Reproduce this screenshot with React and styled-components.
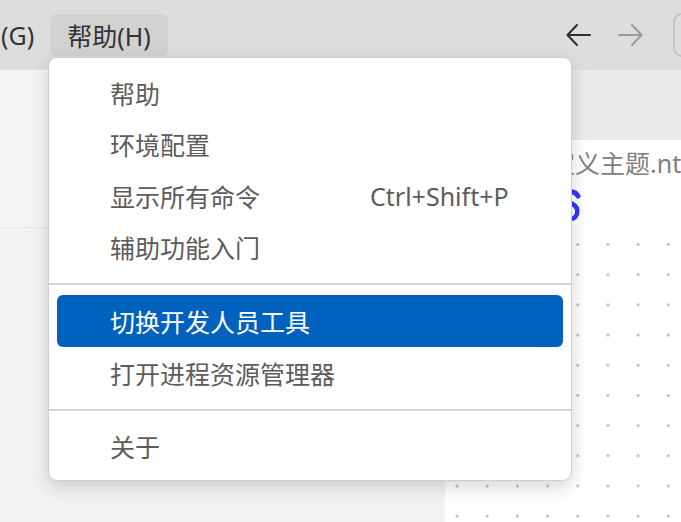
import React from "react"
import styled, { createGlobalStyle } from "styled-components"

const GlobalStyle = createGlobalStyle`
  html, body {
    margin: 0;
    padding: 0;
  }
  body {
    background: #f2f2f2;
    font-family: "Noto Sans", "Noto Sans CJK SC", sans-serif;
  }
`;

const Window = styled.div`
  position: relative;
  width: 681px;
  height: 522px;
  overflow: hidden;
  display: flex;
  flex-direction: column;
  background: #f2f2f2;
`;

const TitleBar = styled.div`
  flex: none;
  height: 70px;
  display: flex;
  align-items: center;
  background: #dddddd;
  color: #333333;
  font-size: 25px;
`;

const MenuBar = styled.div`
  display: flex;
  align-items: center;
  padding-left: 1px;
`;

const MenuName = styled.div`
  height: 42px;
  display: flex;
  align-items: center;
  padding: ${p => (p.$lead ? "0 16px 0 0" : "0 17px")};
  border-radius: 7px;
  white-space: nowrap;
  background: ${p => (p.$open ? "#d2d2d2" : "transparent")};
`;

const Spacer = styled.div`
  flex: 1;
`;

const Nav = styled.div`
  display: flex;
  align-items: center;
  gap: 27px;
`;

const NavIcon = styled.svg`
  display: block;
  width: 25px;
  height: 22px;
  color: ${p => (p.$disabled ? "#9a9a9a" : "#2e2e2e")};
`;

const SearchBox = styled.div`
  flex: none;
  box-sizing: border-box;
  width: 200px;
  height: 44px;
  margin-left: 30px;
  margin-right: -192px;
  border: 2px solid #c4c4c4;
  border-radius: 9px;
`;

const Body = styled.div`
  flex: 1;
  display: flex;
`;

const Sidebar = styled.div`
  flex: none;
  width: 445px;
  display: flex;
  flex-direction: column;
  background: #f2f2f2;
`;

const SidebarHead = styled.div`
  height: 157px;
  background: #f4f4f4;
  border-bottom: 1px solid #e7e7e7;
`;

const Editor = styled.div`
  flex: 1;
  display: flex;
  flex-direction: column;
`;

const TabStrip = styled.div`
  flex: none;
  height: 70px;
  background: #eaeaea;
`;

const Canvas = styled.div`
  flex: 1;
  display: flex;
  flex-direction: column;
  background: #ffffff;
`;

const CanvasHead = styled.div`
  flex: none;
  height: 90px;
  box-sizing: border-box;
  padding: 8px 0 0 80px;
`;

const DocTitle = styled.div`
  height: 30px;
  line-height: 30px;
  font-size: 25px;
  color: #808080;
  white-space: nowrap;
`;

const NodeMark = styled.svg`
  display: block;
  width: 22px;
  height: 36px;
  margin: 10px 0 0 37px;
`;

const DotGrid = styled.div`
  flex: 1;
  background-image: radial-gradient(circle, #b8b8b8 1px, transparent 1.6px);
  background-size: 30.2px 30.2px;
  background-position: -3.1px -0.6px;
`;

const Menu = styled.div`
  position: absolute;
  left: 48px;
  top: 57px;
  width: 524px;
  box-sizing: border-box;
  padding: 9px 0 8px;
  background: #ffffff;
  border: 1px solid #cfcfcf;
  border-radius: 9px;
  box-shadow: 0 6px 18px rgba(0, 0, 0, 0.16);
`;

const Item = styled.div`
  height: ${p => (p.$active ? "52px" : "51.5px")};
  margin: 0 8px;
  padding-left: 53px;
  display: grid;
  grid-template-columns: 260px auto;
  align-items: center;
  border-radius: 6px;
  font-size: 25px;
  white-space: nowrap;
  color: ${p => (p.$active ? "#ffffff" : "#5c5c5c")};
  background: ${p => (p.$active ? "#0062be" : "transparent")};
`;

const Separator = styled.div`
  height: 2px;
  margin: 10px 0;
  background: #d6d6d6;
`;

const groups = [
  [
    { label: "帮助" },
    { label: "环境配置" },
    { label: "显示所有命令", key: "Ctrl+Shift+P" },
    { label: "辅助功能入门" },
  ],
  [
    { label: "切换开发人员工具", active: true },
    { label: "打开进程资源管理器" },
  ],
  [{ label: "关于" }],
];

function Arrow({ dir, disabled }) {
  const d = dir === "left" ? "M11 1 L1.5 11 L11 21 M1.5 11 H24" : "M14 1 L23.5 11 L14 21 M23.5 11 H1";
  return (
    <NavIcon $disabled={disabled} viewBox="0 0 25 22">
      <path d={d} fill="none" stroke="currentColor" strokeWidth="2" strokeLinecap="round" strokeLinejoin="round" />
    </NavIcon>
  );
}

export default function App() {
  return (
    <>
      <GlobalStyle />
      <Window>
        <TitleBar>
          <MenuBar>
            <MenuName $lead>(G)</MenuName>
            <MenuName $open>帮助(H)</MenuName>
          </MenuBar>
          <Spacer />
          <Nav>
            <Arrow dir="left" />
            <Arrow dir="right" disabled />
          </Nav>
          <SearchBox />
        </TitleBar>
        <Body>
          <Sidebar>
            <SidebarHead />
          </Sidebar>
          <Editor>
            <TabStrip />
            <Canvas>
              <CanvasHead>
                <DocTitle>自定义主题.ntheme</DocTitle>
                <NodeMark viewBox="0 0 22 36">
                  <path d="M6 4 Q13 3 16 8" fill="none" stroke="#3535ff" strokeWidth="5" strokeLinecap="round" />
                  <path d="M9 15 Q17 19 15 26 Q13 31 8 31" fill="none" stroke="#3535ff" strokeWidth="4.5" strokeLinecap="round" />
                </NodeMark>
              </CanvasHead>
              <DotGrid />
            </Canvas>
          </Editor>
        </Body>
        <Menu>
          {groups.map((items, gi) => (
            <React.Fragment key={gi}>
              {gi > 0 && <Separator />}
              {items.map(it => (
                <Item key={it.label} $active={it.active}>
                  <span>{it.label}</span>
                  {it.key && <span>{it.key}</span>}
                </Item>
              ))}
            </React.Fragment>
          ))}
        </Menu>
      </Window>
    </>
  );
}
